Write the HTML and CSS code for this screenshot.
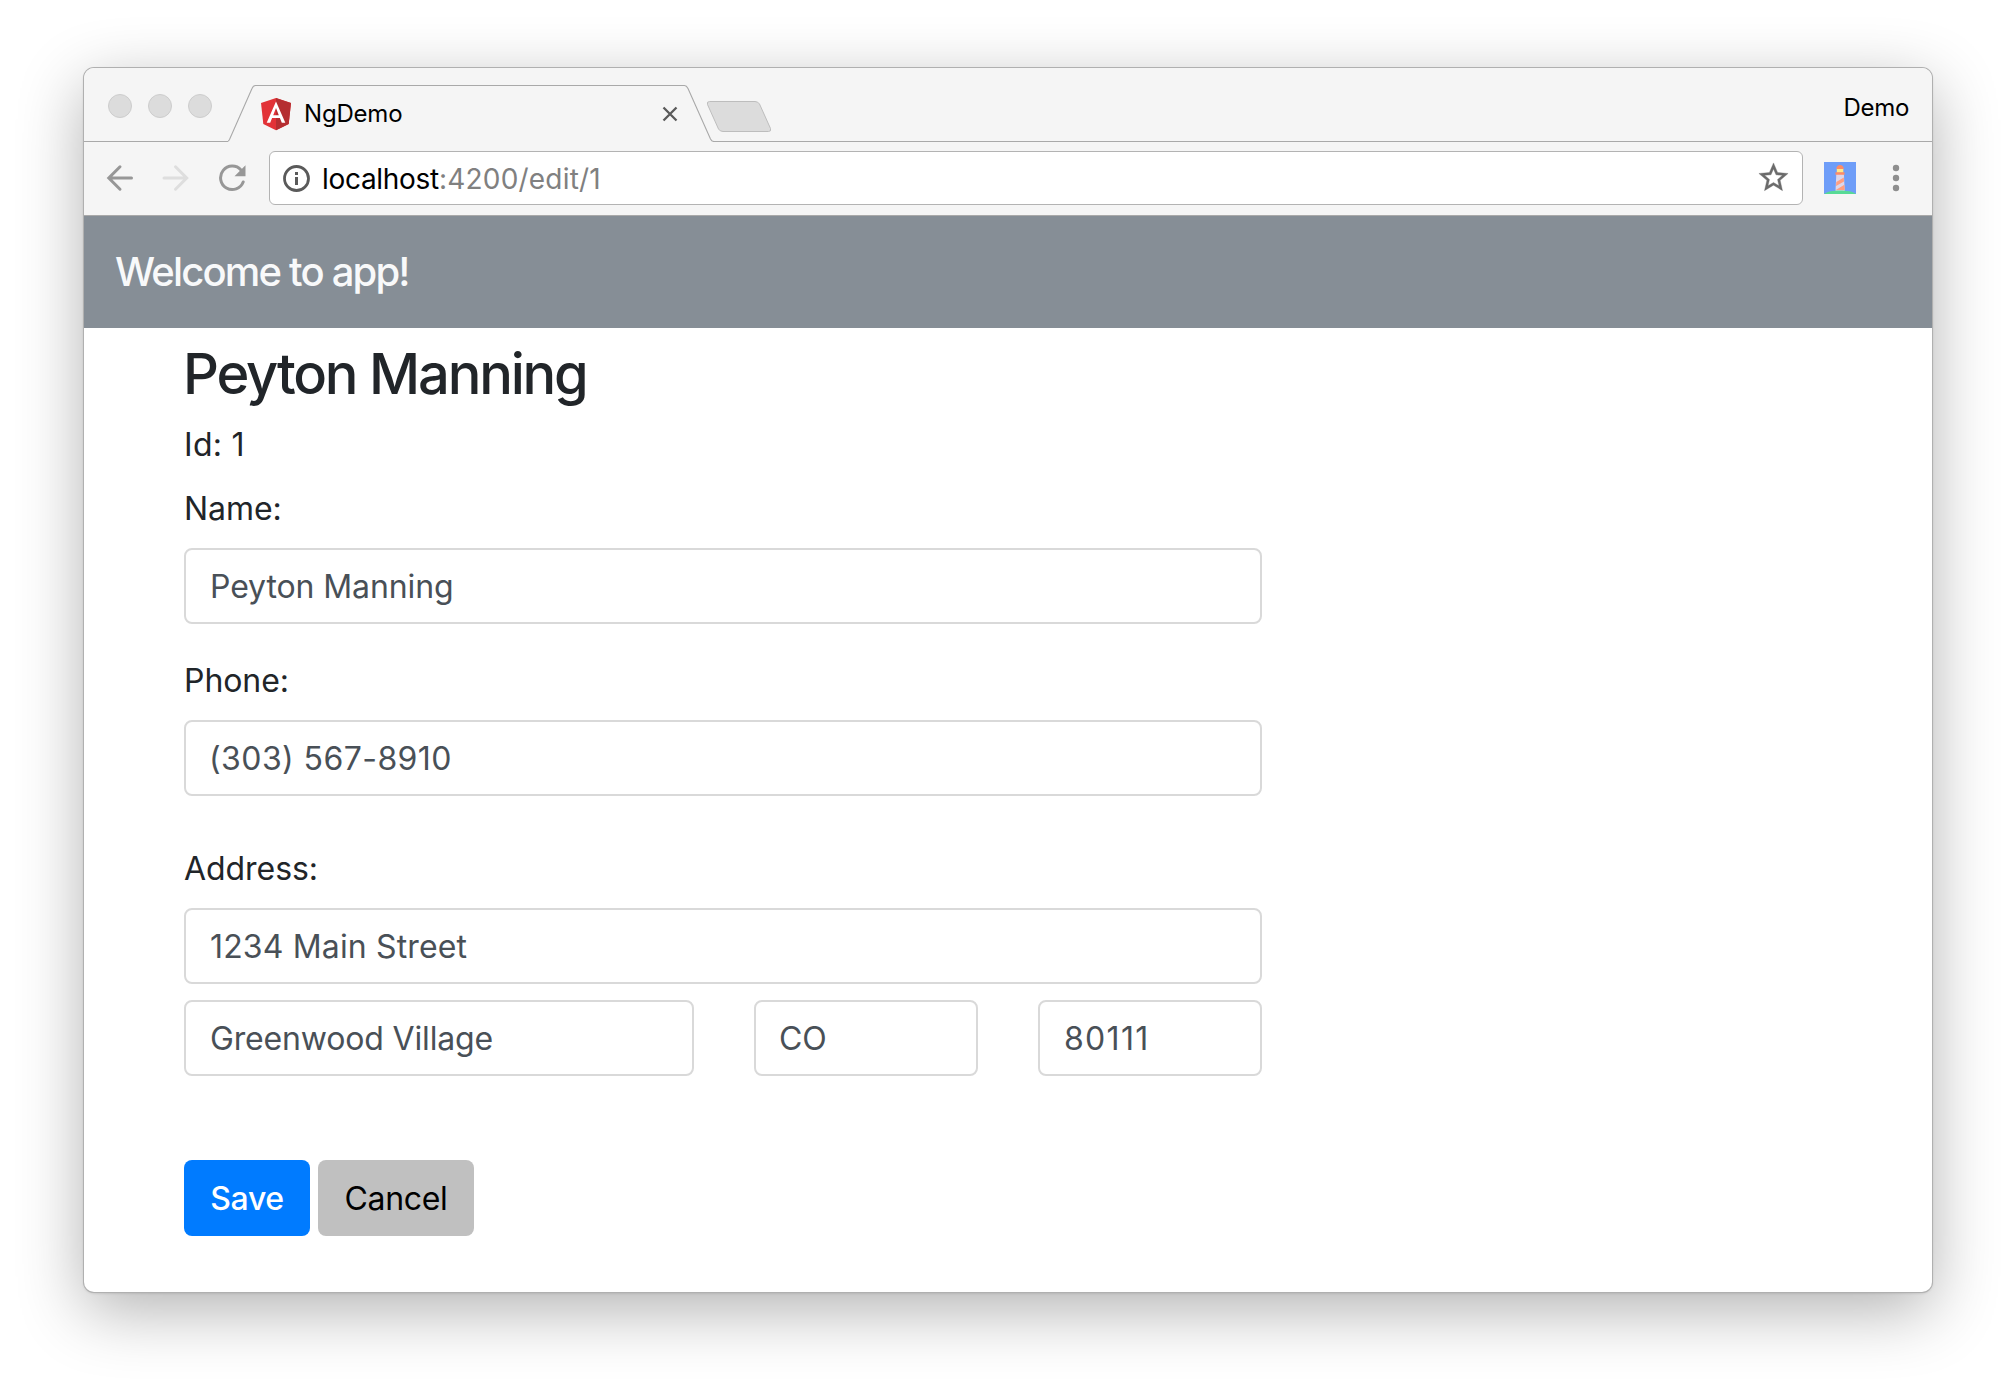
FILE: index.html
```html
<!DOCTYPE html>
<html lang="en">
<head>
<meta charset="utf-8">
<title>NgDemo</title>
<link rel="stylesheet" href="styles.css">
</head>
<body>
<div class="window">
  <div class="tab-strip">
    <div class="traffic-lights"><span class="light"></span><span class="light"></span><span class="light"></span></div>
    <div class="tab">
      <svg class="tab-outline" width="486" height="74" viewBox="0 0 486 74" fill="none" stroke="#a9a9a9" stroke-width="1.1"><path d="M-1 73.500C.5 73.500 1 72.500 1.500 71.500L24 20.500C25 18 25.700 17.500 27.500 17.500H456.500C458.500 17.500 459 18.500 460 20.500L482.500 71C483.500 73 484 73.500 486 73.500"/></svg>
      <svg class="favicon" width="32" height="34" viewBox="0 0 32 34">
        <path fill="#e23237" d="M16 1L31 6l-2.300 21L16 33.200 3.300 27 1 6z"/>
        <path fill="#b52e31" d="M16 1L31 6l-2.300 21L16 33.200z"/>
        <path fill="#fff" fill-rule="evenodd" d="M16 4.500L6.700 25.800h3.500l1.900-4.700h7.800l1.900 4.700h3.500zM16 11l2.800 7.200h-5.600z"/>
      </svg>
      <span class="tab-title">NgDemo</span>
      <svg class="tab-close" width="16" height="16" viewBox="0 0 16 16" stroke="#5a5a5a" stroke-width="2.300" fill="none"><path d="M1.500 1.500l13 13M14.500 1.500l-13 13"/></svg>
    </div>
    <div class="strip-rest">
      <svg class="new-tab" width="67" height="33" viewBox="0 0 67 33"><path fill="#dcdcdc" stroke="#bdbdbd" d="M3.500 1.500H49Q52 1.500 53.500 4L64.500 28.500Q65.500 31.500 62.500 31.500H17Q14 31.500 12.500 29L1.500 4.500Q.5 1.500 3.500 1.500z"/></svg>
      <span class="profile">Demo</span>
    </div>
  </div>
  <div class="toolbar">
    <svg class="back" width="28" height="28" viewBox="0 0 28 28" fill="none" stroke="#979797" stroke-width="3" stroke-linecap="round" stroke-linejoin="miter"><path d="M25.500 14H3.500M14 2.800L2.800 14l11.200 11.200"/></svg>
    <svg class="forward" width="28" height="28" viewBox="0 0 28 28" fill="none" stroke="#dedede" stroke-width="3" stroke-linecap="round" stroke-linejoin="miter"><path d="M2 14h22M13.500 2.800L24.700 14 13.500 25.200"/></svg>
    <svg class="reload" width="28" height="28" viewBox="0 0 28 28"><path fill="none" stroke="#979797" stroke-width="3" stroke-linecap="round" d="M25.200 18A11.700 11.700 0 1 1 23 6"/><path fill="#979797" d="M27.500 1.300v11H16.500z"/></svg>
    <div class="address-bar">
      <svg class="info" width="28" height="28" viewBox="0 0 28 28"><circle cx="14.500" cy="14.500" r="12" fill="none" stroke="#5a5a5a" stroke-width="2.800"/><path fill="#5a5a5a" d="M13 8h3v3h-3zM13 13h3v8h-3z"/></svg>
      <span class="url"><span class="host">localhost</span><span class="path">:4200/edit/1</span></span>
      <svg class="star" width="35" height="35" viewBox="0 0 24 24"><path fill="#6b6b6b" stroke="#6b6b6b" stroke-width=".25" d="M22 9.240l-7.190-.62L12 2 9.190 8.630 2 9.240l5.460 4.730L5.820 21 12 17.270 18.180 21l-1.630-7.030L22 9.240zM12 15.400l-3.760 2.270 1-4.280-3.320-2.880 4.380-.38L12 6.100l1.710 4.040 4.380.38-3.320 2.880 1 4.280L12 15.400z"/></svg>
    </div>
    <svg class="lighthouse" width="32" height="32" viewBox="0 0 32 32">
      <path fill="#6e9df8" d="M0 0h32v32H0z"/>
      <path fill="#dcd6ea" d="M12.300 12h7.600l.8 17h-9.200z"/>
      <path fill="#ff9e80" d="M12.300 20l7.500-4.500.2 4-8 4.500zM11.800 28l8.600-5.200.3 5.200z"/>
      <path fill="#ffe98a" d="M12.800 6.500h6.500v4.300h-6.500z"/>
      <path fill="#ff8a65" d="M12.300 7c0-5.300 7.500-5.300 7.500 0zM11.500 10.300h9v2.500h-9z"/>
      <path fill="#57da96" d="M0 32C3 29.500 9 28.500 16 28.500S29 29.500 32 32z"/>
    </svg>
    <svg class="menu" width="8" height="28" viewBox="0 0 8 28" fill="#8e8e8e"><circle cx="4" cy="4" r="3.200"/><circle cx="4" cy="14" r="3.200"/><circle cx="4" cy="24" r="3.200"/></svg>
  </div>
  <header class="app-header"><span class="brand">Welcome to app!</span></header>
  <main class="content">
    <h3 class="person">Peyton Manning</h3>
    <p class="person-id">Id: 1</p>
    <form class="form">
      <div class="group">
        <label class="label" for="name">Name:</label>
        <input class="field" id="name" type="text" value="Peyton Manning">
      </div>
      <div class="group">
        <label class="label" for="phone">Phone:</label>
        <input class="field field-phone" id="phone" type="text" value="(303) 567-8910">
      </div>
      <div class="group group-address">
        <label class="label" for="street">Address:</label>
        <input class="field field-street" id="street" type="text" value="1234 Main Street">
        <div class="city-row">
          <input class="field field-city" type="text" value="Greenwood Village" aria-label="City">
          <input class="field field-state" type="text" value="CO" aria-label="State">
          <input class="field field-zip" type="text" value="80111" aria-label="Zip">
        </div>
      </div>
      <div class="actions">
        <button class="btn btn-save" type="button">Save</button>
        <button class="btn btn-cancel" type="button">Cancel</button>
      </div>
    </form>
  </main>
</div>
</body>
</html>
```
FILE: styles.css
```css
* { box-sizing: border-box; }

body {
  margin: 0;
  padding: 68px 84px 100px;
  background: #fff;
  color: #212529;
  font-family: Inter, "Liberation Sans", sans-serif;
  font-size: 32px;
  line-height: 48px;
}

svg { display: block; flex: none; }

.window {
  width: 1848px;
  height: 1224px;
  background: #fff;
  border-radius: 10px;
  box-shadow: 0 0 0 1px #b0b0b0, 0 1px 3px rgba(0, 0, 0, .18), 0 18px 66px rgba(0, 0, 0, .31);
  overflow: hidden;
}

.tab-strip {
  display: flex;
  height: 74px;
  background: #f5f5f5;
}

.traffic-lights {
  display: flex;
  gap: 16px;
  width: 144px;
  padding: 26px 0 0 24px;
  border-bottom: 1px solid #a9a9a9;
}

.light {
  width: 24px;
  height: 24px;
  border: 1px solid #cdcdcd;
  border-radius: 50%;
  background: #dcdcdc;
}

.tab {
  position: relative;
  display: flex;
  align-items: center;
  width: 486px;
  padding: 18px 36px 0 32px;
}

.tab-outline { position: absolute; left: 0; top: 0; }

.favicon { margin-top: -1px; }

.tab-title {
  flex: 1;
  margin-left: 12px;
  color: #000;
  font-size: 24px;
  letter-spacing: -.2px;
}

.tab-close { margin-top: -1px; }

.strip-rest {
  display: flex;
  flex: 1;
  justify-content: space-between;
  padding-right: 23px;
  border-bottom: 1px solid #a9a9a9;
}

.new-tab { margin: 32px 0 0 -8px; }

.profile {
  margin-top: 16px;
  color: #000;
  font-size: 24px;
  letter-spacing: -.3px;
}

.toolbar {
  display: flex;
  align-items: center;
  height: 74px;
  padding: 0 32px 2px 22px;
  border-bottom: 1px solid #a9a9a9;
  background: #f5f5f5;
}

.forward { margin-left: 28px; }
.reload { margin-left: 28px; }

.address-bar {
  display: flex;
  align-items: center;
  width: 1534px;
  height: 54px;
  margin-left: 23px;
  padding: 0 11px 0 12px;
  border: 1px solid #b3b3b3;
  border-radius: 6px;
  background: #fff;
}

.url {
  flex: 1;
  margin-left: 12px;
  padding-top: 2px;
  font-size: 28px;
}

.host { color: #000; letter-spacing: -.3px; }
.path { color: #808080; letter-spacing: .2px; }

.lighthouse { margin-left: 21px; }
.menu { margin-left: 36px; }

.app-header {
  display: flex;
  align-items: center;
  height: 112px;
  padding-left: 31px;
  background: #868e96;
  color: #f8f9fa;
}

.brand { font-size: 40px; font-weight: 500; letter-spacing: -1.82px; }

.content { width: 1178px; padding: 15px 0 0 100px; }

.person {
  margin: 0 0 16px -1px;
  font-size: 56px;
  font-weight: 500;
  line-height: 62px;
  letter-spacing: -2.19px;
}

.person-id { margin: 0 0 16px; letter-spacing: .3px; }

.group { margin-bottom: 33px; }
.group + .group { margin-bottom: 49px; }
.form .group-address { margin-bottom: 84px; }

.label { display: block; height: 63px; letter-spacing: -.06px; }

.field {
  display: block;
  width: 100%;
  height: 76px;
  padding: 1px 24px 0;
  border: 2px solid #d9d9d9;
  border-radius: 8px;
  background: #fff;
  color: #495057;
  font: inherit;
  letter-spacing: -.1px;
}

.field-phone { padding-left: 23px; letter-spacing: .42px; }
.field-street { letter-spacing: .15px; }
.field-city { letter-spacing: -.16px; }
.field-state { padding-left: 23px; }
.field-zip { letter-spacing: 1.3px; }

.city-row {
  display: grid;
  grid-template-columns: 510px 224px 224px;
  gap: 60px;
  margin-top: 16px;
}

.actions { display: flex; gap: 8px; }

.btn {
  height: 76px;
  padding: 2px 0 0;
  border: 0;
  border-radius: 8px;
  font: inherit;
  letter-spacing: -.35px;
}

.btn-save { width: 126px; background: #007bff; color: #fff; font-weight: 500; }
.btn-cancel { width: 156px; background: #c0c0c0; color: #000; }
```
